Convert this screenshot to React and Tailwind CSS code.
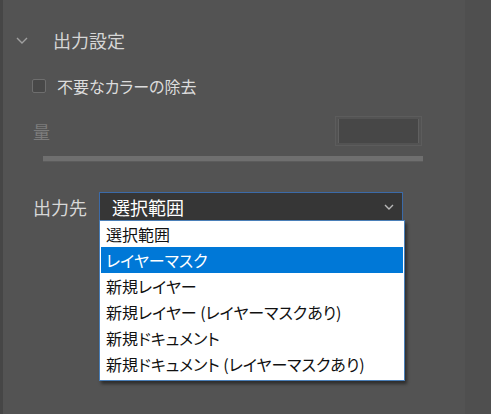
const options = [
  "選択範囲",
  "レイヤーマスク",
  "新規レイヤー",
  "新規レイヤー (レイヤーマスクあり)",
  "新規ドキュメント",
  "新規ドキュメント (レイヤーマスクあり)",
];

function Chevron({ className, w = 10, h = 6 }) {
  return (
    <svg className={className} width={w + 2} height={h + 2} viewBox={`-1 -1 ${w + 2} ${h + 2}`} fill="none">
      <polyline points={`0,0 ${w / 2},${h} ${w},0`} stroke="currentColor" strokeWidth="1.4" />
    </svg>
  );
}

export default function App() {
  return (
    <div
      className="w-[491px] h-[414px] bg-[#535353] flex overflow-hidden [font-feature-settings:'palt']"
      style={{ fontFamily: '"Noto Sans CJK JP", "Noto Sans", sans-serif' }}
    >
      <div className="w-[3px] bg-[#464646]" />

      <div className="flex-1 flex flex-col">
        {/* section header */}
        <div className="flex items-center h-[26px] mt-[27px]">
          <Chevron className="ml-[13px] text-[#a0a0a0]" w={10} h={5} />
          <span className="ml-[25px] text-[18px] leading-none text-[#d6d6d6]">出力設定</span>
        </div>

        {/* checkbox */}
        <div className="flex items-center h-[22px] mt-[22px]">
          <div className="ml-[29px] w-[14px] h-[14px] rounded-[2px] border border-[#6e6e6e] bg-[#484848]" />
          <span className="ml-[11px] text-[16px] leading-none text-[#dcdcdc]">不要なカラーの除去</span>
        </div>

        {/* amount */}
        <div className="flex items-center h-[30px] mt-[19px]">
          <span className="ml-[30px] text-[17px] leading-none text-[#7c7c7c]">量</span>
          <div className="ml-auto mr-[43px] w-[87px] h-[30px] border border-[#5c5c5c] p-[2px]">
            <div className="w-full h-full bg-[#474747] border-x border-[#606060]" />
          </div>
        </div>

        {/* slider track */}
        <div className="ml-[40px] mr-[42px] h-[6px] mt-[10px] bg-[#6f6f6f] border-b border-[#5c5c5c]" />

        {/* output */}
        <div className="flex items-center h-[29px] mt-[30px]">
          <span className="ml-[30px] w-[66px] text-[18px] leading-none text-[#d8d8d8]">出力先</span>
          <div className="relative w-[304px] h-[29px] bg-[#363636] border border-[#3b6aa8] flex items-center">
            <span className="ml-[12px] text-[18px] leading-none text-white">選択範囲</span>
            <Chevron className="ml-auto mr-[8px] text-[#b8b8b8]" w={8} h={4} />

            {/* open list */}
            <div className="absolute -left-px top-[27px] w-[306px] bg-white border border-[#4a7fb8] pb-[3px] shadow-[2px_3px_3px_rgba(0,0,0,0.45)]">
              {options.map((o, i) => (
                <div
                  key={o}
                  className={
                    i === 1
                      ? "h-[26px] mx-[1px] flex items-center pl-[5px] text-[16px] leading-none bg-[#0078d7] text-white"
                      : "h-[26px] mx-[1px] flex items-center pl-[5px] text-[16px] leading-none text-[#111]"
                  }
                >
                  {o}
                </div>
              ))}
            </div>
          </div>
        </div>
      </div>

      <div className="w-[26px] bg-[#4f4f4f]" />
    </div>
  );
}
